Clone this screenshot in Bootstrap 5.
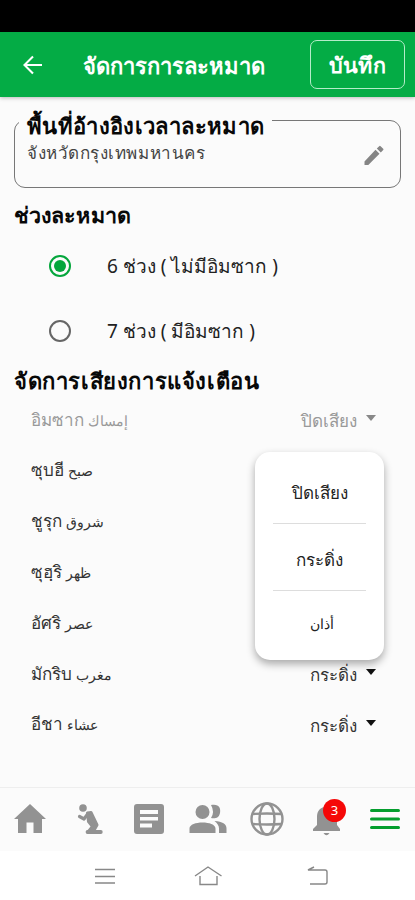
<!DOCTYPE html>
<html lang="th">
<head>
<meta charset="utf-8">
<meta name="viewport" content="width=device-width, initial-scale=1">
<title>จัดการการละหมาด</title>
<link href="https://cdn.jsdelivr.net/npm/bootstrap@5.3.0/dist/css/bootstrap.min.css" rel="stylesheet">
<style>
body{height:900px;overflow:hidden;background:#fbfbfb;color:#222;font-family:"Noto Sans","Liberation Sans",sans-serif;white-space:nowrap}
.status{height:32px;background:#000}
.topbar{height:65px;background:#04ac45;box-shadow:0 1px 4px #0004;padding:0 10px 0 22px}
.topbar h1{font-size:22px;font-weight:700;line-height:30px;margin-left:39px}
.save{width:95px;height:49px;border:1.5px solid #b5ecc9;border-radius:7px;font-size:21.5px;font-weight:700;color:#fff;line-height:30px;padding:0;letter-spacing:.4px}
.area{height:68px;margin:23px 14px 0;border:1.5px solid #777;border-radius:11px;padding:0 14px 0 4px}
.heading{font-size:21.5px;font-weight:700;color:#080808;line-height:30px;margin:0;letter-spacing:.1px}
.heading.legend-tag{height:30px;width:253px;margin-top:-11px;padding-left:8px;background:#fbfbfb;font-size:22px;letter-spacing:.35px}
.heading.wide{font-size:22px;letter-spacing:.6px;padding-top:2px}
.place{font-size:17px;line-height:25px;padding-left:8px;color:#444;letter-spacing:.55px}
.sec-a{margin:12px 14px 0}
.choice{height:64.5px;padding-left:35px;gap:36px;font-size:19px}
.first{margin-top:4px}
.ring{width:22px;height:22px;border:2px solid #666;border-radius:50%}
.ring.on{border-color:#04a63c}
.ring.on::after{content:"";width:12px;height:12px;border-radius:50%;background:#04a63c}
.rows{margin-top:-1px}
.prayer{height:50.8px;padding:0 39px 0 31px;font-size:17px;color:#333}
.prayer.off{color:#999}
.prayer bdi,.pop bdi{font-size:14px}
.tri{width:0;height:0;border:5.5px solid transparent;border-top:6px solid currentColor;border-bottom:0;margin:-3px 0 0 9px;color:#111}
.val{padding-top:3px}
.off .tri{color:#888}
.pop{left:255px;top:58px;width:129px;height:208px;background:#fff;border-radius:15px;box-shadow:0 4px 9px #0005;padding:4px 18px 4px}
.pop>div{height:67px;font-size:17px;padding-top:6px}
.pop>div+div{border-top:1px solid #ddd}
.pop>div:last-child{padding:0 0 2px 4px}
.tabs{height:64px;border-top:1px solid #eee;color:#929292}
.tabs svg,.sys svg{display:block;width:100%;height:100%}
.sys{height:49px;background:#fff}
.count{left:323px;top:11px;width:23px;height:23px;border-radius:50%;background:#f50808;color:#fff;font-size:13px}
</style>
<script src="https://cdn.jsdelivr.net/npm/bootstrap@5.3.0/dist/js/bootstrap.bundle.min.js"></script>
</head>
<body class="d-flex flex-column m-0">
<div class="status flex-shrink-0"></div>
<header class="topbar d-flex align-items-center flex-shrink-0 text-white">
<svg width="22" height="22" viewBox="0 0 22 22" fill="none" stroke="currentColor" stroke-width="2.1"><path d="M20 11H3M11 2.500L2.500 11l8.500 8.500"/></svg>
<h1 class="mb-0">จัดการการละหมาด</h1>
<button class="save btn ms-auto">บันทึก</button>
</header>
<main class="flex-grow-1">
<section class="area">
<div class="legend-tag heading">พื้นที่อ้างอิงเวลาละหมาด</div>
<div class="d-flex justify-content-between">
<span class="place">จังหวัดกรุงเทพมหานคร</span>
<svg class="mt-1" width="24" height="24" viewBox="0 0 24 24" fill="#858585"><path d="M2.500 17.500v3.500h3.800L17.500 9.800l-4-4zM21.200 6.100a1 1 0 0 0 0-1.400l-2.600-2.500a1 1 0 0 0-1.400 0l-2.400 2.400 4 4z"/></svg>
</div>
</section>
<section class="sec-a">
<h2 class="heading">ช่วงละหมาด</h2>
<div class="choice first d-flex align-items-center"><span class="ring on d-flex align-items-center justify-content-center"></span><span>6 ช่วง ( ไม่มีอิมซาก )</span></div>
<div class="choice d-flex align-items-center"><span class="ring"></span><span>7 ช่วง ( มีอิมซาก )</span></div>
<h2 class="heading wide">จัดการเสียงการแจ้งเตือน</h2>
</section>
<section class="rows position-relative">
<div class="prayer off d-flex align-items-center"><span>อิมซาก <bdi lang="ar">إمساك</bdi></span><span class="val ms-auto">ปิดเสียง</span><i class="tri"></i></div>
<div class="prayer d-flex align-items-center"><span>ซุบฮี <bdi lang="ar">صبح</bdi></span></div>
<div class="prayer d-flex align-items-center"><span>ชูรุก <bdi lang="ar">شروق</bdi></span></div>
<div class="prayer d-flex align-items-center"><span>ซุฮฺริ <bdi lang="ar">ظهر</bdi></span></div>
<div class="prayer d-flex align-items-center"><span>อัศริ <bdi lang="ar">عصر</bdi></span></div>
<div class="prayer d-flex align-items-center"><span>มักริบ <bdi lang="ar">مغرب</bdi></span><span class="val ms-auto">กระดิ่ง</span><i class="tri"></i></div>
<div class="prayer d-flex align-items-center"><span>อีชา <bdi lang="ar">عشاء</bdi></span><span class="val ms-auto">กระดิ่ง</span><i class="tri"></i></div>
<div class="pop position-absolute">
<div class="d-flex align-items-center justify-content-center">ปิดเสียง</div>
<div class="d-flex align-items-center justify-content-center">กระดิ่ง</div>
<div class="d-flex align-items-center justify-content-center"><bdi lang="ar">أذان</bdi></div>
</div>
</section>
</main>
<nav class="tabs position-relative flex-shrink-0">
<svg viewBox="0 0 415 63" fill="currentColor">
<path d="M30 16L14 31h4v14h8.500V34.500h7V45H42V31h4z"/>
<circle cx="83" cy="20" r="3.800"/>
<g stroke="currentColor" stroke-linecap="round" stroke-linejoin="round"><path fill="none" stroke-width="3.200" d="M88 25.500l-4 5.500-4.500-2.500"/><path stroke-width="3" d="M87.500 25l3.500-.5 6 12.500-4 7h-5l4.500-5.500-4-5z"/><path stroke-width="3.800" d="M87.500 44h13.300"/></g>
<path fill-rule="evenodd" d="M137 16h24q3 0 3 3v24q0 3-3 3h-24q-3 0-3-3V19q0-3 3-3zm3 6v4h18v-4zm0 7v3.500h18V29zm0 6.500v4h12v-4z"/>
<circle cx="202.500" cy="24" r="7"/><path d="M189.500 45v-4.500c0-8 26-8 26 0V45zM211 17c8-1.500 10 3 9 8s-5 6-9 5q4-6 0-13zM214.500 33c8 .5 12 3 12 7.500V45h-7.500v-4.500q0-4-4.500-7.500z"/>
<g fill="none" stroke="currentColor" stroke-width="2.400"><circle cx="267" cy="31" r="15.500"/><ellipse cx="267" cy="31" rx="7.500" ry="15.500"/><path d="M252.500 26q14.500-1 29 0M252.500 36q14.500 1 29 0"/></g>
<path d="M313 43v-2l4-4v-8c0-6 3-9 7-10 1-4 5-4 6 0 4 1 7 4 7 10v8l3 4v2zM323.500 45h6q-3 4.500-6 0z"/>
<path d="M371.500 22.500h27M371.500 31h27M371.500 39.500h27" stroke="#049e2e" stroke-width="3" stroke-linecap="round"/>
</svg>
<span class="count position-absolute d-flex align-items-center justify-content-center">3</span>
</nav>
<div class="sys flex-shrink-0"><svg viewBox="0 0 415 49" fill="none" stroke="#888" stroke-width="1.400"><path d="M95 18.500h20M95 25.500h20M95 32h20M195 25l13-9 13.500 9M200 25v8.500h17V25M314 16l-6 3h17q2 0 2 2v10q0 2-2 2h-15"/></svg></div>
</body>
</html>
